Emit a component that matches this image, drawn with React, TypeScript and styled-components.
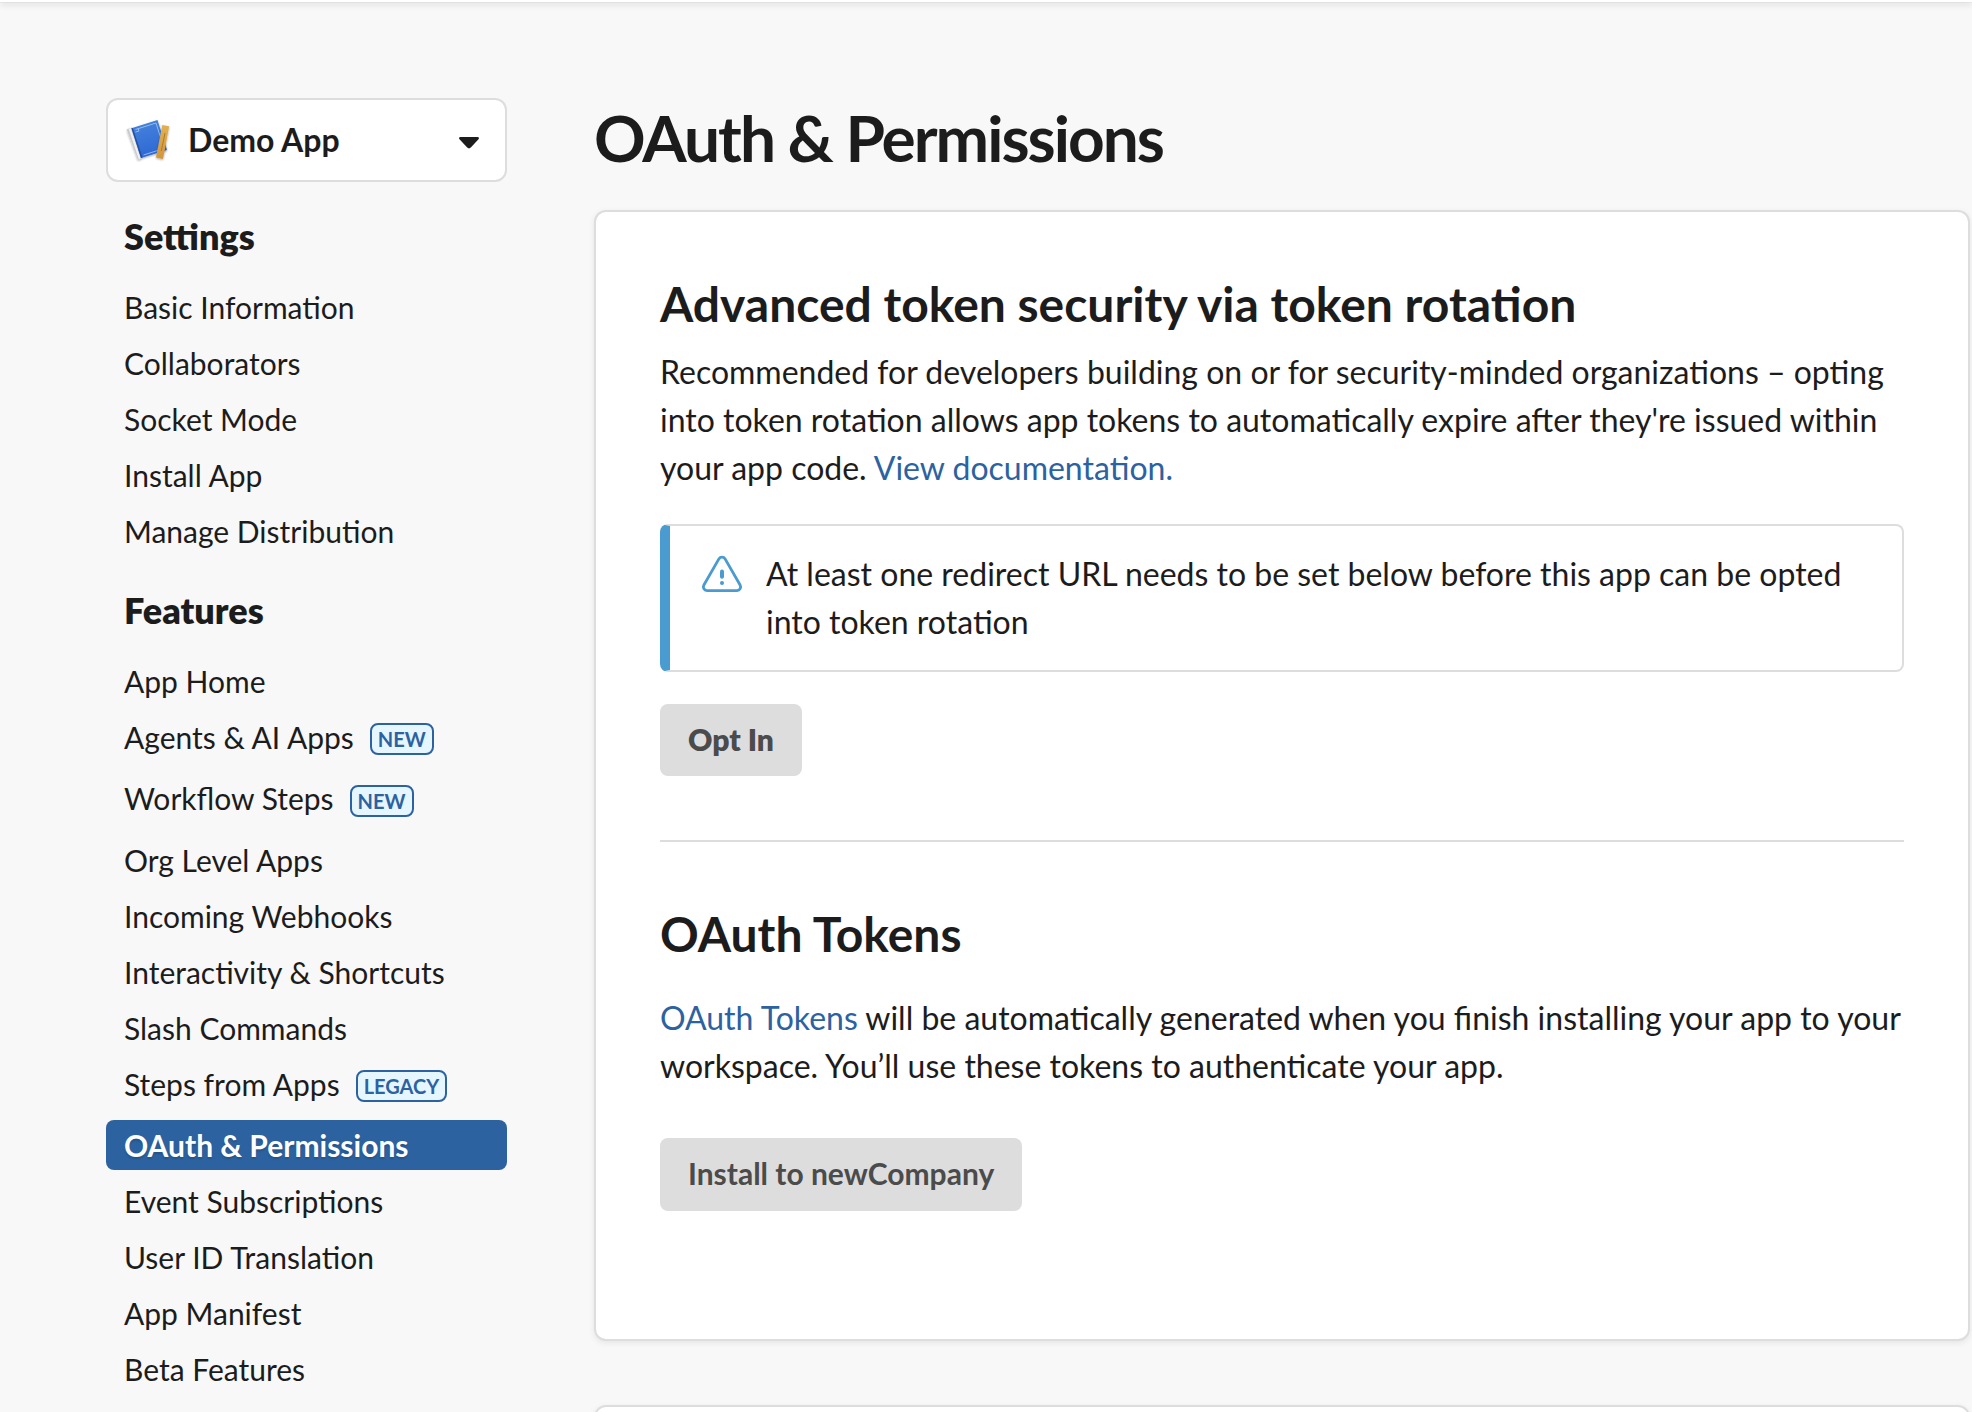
import React from "react";
import styled, { createGlobalStyle, css } from "styled-components";

const Global = createGlobalStyle`
  * { box-sizing: border-box; }
  html, body { margin: 0; padding: 0; background: #f8f8f8; }
  body {
    font-family: Lato, "Noto Sans", sans-serif;
    color: #1d1c1d;
    overflow: hidden;
    -webkit-font-smoothing: antialiased;
  }
`;

const Page = styled.div`
  height: 1412px;
  overflow: hidden;
  background: #f8f8f8;
`;

const TopBar = styled.header`
  height: 2px;
  background: #fff;
  box-shadow: 0 1px 0 rgba(0, 0, 0, 0.04), 0 2px 6px rgba(0, 0, 0, 0.22);
`;

const Layout = styled.div`
  display: flex;
  align-items: flex-start;
  gap: 87px;
  padding: 96px 2px 0 106px;
`;

const Sidebar = styled.nav`
  flex: none;
  width: 401px;
`;

const AppSelect = styled.button`
  display: flex;
  align-items: center;
  width: 100%;
  height: 84px;
  margin: 0 0 6.3px;
  padding: 0 25px 0 18px;
  border: 2px solid #dddddd;
  border-radius: 12px;
  background: #fff;
  color: inherit;
  font: 700 32px/48px Lato, "Noto Sans", sans-serif;
  text-align: left;
`;

const AppName = styled.span`
  flex: 1;
  margin-left: 14px;
`;

const GroupTitle = styled.h3`
  margin: 0;
  padding: 26px 18px 23px;
  font-size: 36px;
  line-height: 45px;
  font-weight: 800;
`;

const NavList = styled.ul`
  list-style: none;
  margin: 0;
  padding: 0;
`;

const NavItem = styled.li<{ $active?: boolean; $tagged?: boolean }>`
  display: flex;
  align-items: flex-start;
  height: ${(p) => (p.$tagged ? "55.18px" : "50px")};
  margin-bottom: 6px;
  padding: 0 18px;
  font-size: 30px;
  line-height: 50px;
  white-space: nowrap;
  ${(p) =>
    p.$active &&
    css`
      border-radius: 8px;
      background: #2c629f;
      color: #fff;
      font-weight: 700;
      text-shadow: 0 2px 2px rgba(0, 0, 0, 0.15);
    `}
`;

const Tag = styled.span`
  height: 32px;
  margin: 11.15px 0 0 16px;
  padding: 0 6px;
  border: 2px solid #2c629f;
  border-radius: 8px;
  background: #e6f6ff;
  color: #2c629f;
  font-size: 20px;
  line-height: 29px;
  font-weight: 700;
`;

const Main = styled.main`
  flex: 1;
  min-width: 0;
`;

const PageTitle = styled.h1`
  margin: 0;
  height: 112px;
  font-size: 64px;
  line-height: 80px;
  font-weight: 700;
  letter-spacing: -2px;
  white-space: nowrap;
`;

const Card = styled.section`
  height: 1131px;
  margin-bottom: 64px;
  padding: 64px;
  border: 2px solid #dddddd;
  border-radius: 12px;
  background: #fff;
  box-shadow: 0 2px 6px rgba(0, 0, 0, 0.08);
`;

const SectionTitle = styled.h2`
  margin: 0;
  font-size: 48px;
  line-height: 55px;
  font-weight: 700;
`;

const Text = styled.p<{ $gap: number }>`
  margin: ${(p) => p.$gap}px 0 0;
  font-size: 32px;
  line-height: 48px;
  white-space: nowrap;
`;

const Link = styled.a`
  color: #2c629f;
  text-decoration: none;
`;

const Alert = styled.div`
  display: flex;
  align-items: flex-start;
  height: 148px;
  margin: 32px 0;
  padding: 24px 24px 24px 30px;
  border: 2px solid #dddddd;
  border-left: 10px solid #4a9bd0;
  border-radius: 8px;
  font-size: 32px;
  line-height: 48px;
  white-space: nowrap;

  svg {
    flex: none;
    margin: 4px 22px 0 0;
  }
`;

const Button = styled.button<{ $weight: number; $height: number; $gap?: number }>`
  display: flex;
  align-items: flex-start;
  height: ${(p) => p.$height}px;
  margin: ${(p) => p.$gap ?? 0}px 0 0;
  padding: 0 28px;
  border: 0;
  border-radius: 8px;
  background: #dddddd;
  color: #4b4b4b;
  font: ${(p) => p.$weight} 30px/70px Lato, "Noto Sans", sans-serif;
`;

const Divider = styled.hr`
  height: 2px;
  margin: 64px 0;
  border: 0;
  background: #dddddd;
`;

const Caret = styled.svg`
  flex: none;
  margin-top: 6px;
`;

const BlueprintIcon = () => (
  <svg width="48" height="48" viewBox="0 0 48 48">
    <defs>
      <linearGradient id="sheet" x1="0" y1="0" x2="0.2" y2="1">
        <stop offset="0" stopColor="#4685dc" />
        <stop offset="1" stopColor="#2f68d4" />
      </linearGradient>
      <linearGradient id="ruler" x1="0" y1="0" x2="0" y2="1">
        <stop offset="0" stopColor="#e0b252" />
        <stop offset="1" stopColor="#d2963c" />
      </linearGradient>
      <filter id="soft" x="-20%" y="-20%" width="140%" height="140%">
        <feDropShadow dx="0" dy="1" stdDeviation="0.8" floodOpacity="0.35" />
      </filter>
    </defs>
    <g filter="url(#soft)">
      <path d="M0.8 13.2L6 11.5L16 42L12 44Z" fill="#c9c9c9" />
      <path d="M2.6 12.8L4.6 12.1L14.6 42.4L12.8 43.3Z" fill="#f1f1f1" />
      <path d="M5.5 12.3L31.5 4L41 34L15 42Z" fill="url(#sheet)" />
      <path d="M5.5 12.3L15 42L16.5 41.5L6.8 11.9Z" fill="#234f9f" />
    </g>
    <path d="M9.5 13.5L30 7L38 32.5L17.5 39M9.5 16L13 15L12.2 12.8" fill="none" stroke="#a9c9f5" strokeWidth="0.8" />
    <g filter="url(#soft)">
      <path d="M36.3 9L43.2 10.3L37 43L30 41.5Z" fill="url(#ruler)" />
      <path d="M39 17L35.3 35" stroke="#a8742a" strokeWidth="0.9" />
    </g>
  </svg>
);

const CaretIcon = () => (
  <Caret width="22" height="14" viewBox="0 0 22 14">
    <path
      d="M2.4 1H19.6C20.9 1 21.4 2.3 20.5 3.2L12.8 11.6C11.8 12.7 10.2 12.7 9.2 11.6L1.5 3.2C0.6 2.3 1.1 1 2.4 1Z"
      fill="#1d1c1d"
    />
  </Caret>
);

const WarningIcon = () => (
  <svg width="44" height="40" viewBox="0 0 44 40" fill="none" stroke="#4a9bd0">
    <path
      d="M18.9 4.9C20.4 2.5 23.6 2.5 25.1 4.9L40.1 31C41.5 33.4 40 36.6 37 36.6H7C4 36.6 2.5 33.4 3.9 31Z"
      strokeWidth="2.8"
      strokeLinejoin="round"
    />
    <path d="M22 17.4V22.8" strokeWidth="4" strokeLinecap="round" />
    <circle cx="22" cy="29" r="2" fill="#4a9bd0" stroke="none" />
  </svg>
);

type Entry = { label: string; tag?: string; active?: boolean };

const groups: { title: string; items: Entry[] }[] = [
  {
    title: "Settings",
    items: [
      { label: "Basic Information" },
      { label: "Collaborators" },
      { label: "Socket Mode" },
      { label: "Install App" },
      { label: "Manage Distribution" },
    ],
  },
  {
    title: "Features",
    items: [
      { label: "App Home" },
      { label: "Agents & AI Apps", tag: "NEW" },
      { label: "Workflow Steps", tag: "NEW" },
      { label: "Org Level Apps" },
      { label: "Incoming Webhooks" },
      { label: "Interactivity & Shortcuts" },
      { label: "Slash Commands" },
      { label: "Steps from Apps", tag: "LEGACY" },
      { label: "OAuth & Permissions", active: true },
      { label: "Event Subscriptions" },
      { label: "User ID Translation" },
      { label: "App Manifest" },
      { label: "Beta Features" },
    ],
  },
];

export default function App() {
  return (
    <Page>
      <Global />
      <TopBar />
      <Layout>
        <Sidebar>
          <AppSelect>
            <BlueprintIcon />
            <AppName>Demo App</AppName>
            <CaretIcon />
          </AppSelect>
          {groups.map((group) => (
            <div key={group.title}>
              <GroupTitle>{group.title}</GroupTitle>
              <NavList>
                {group.items.map((item) => (
                  <NavItem key={item.label} $active={item.active} $tagged={!!item.tag}>
                    {item.label}
                    {item.tag && <Tag>{item.tag}</Tag>}
                  </NavItem>
                ))}
              </NavList>
            </div>
          ))}
        </Sidebar>
        <Main>
          <PageTitle>OAuth &amp; Permissions</PageTitle>
          <Card>
            <SectionTitle>Advanced token security via token rotation</SectionTitle>
            <Text $gap={17}>
              Recommended for developers building on or for security-minded organizations – opting
              <br />
              into token rotation allows app tokens to automatically expire after they're issued within
              <br />
              your app code. <Link>View documentation.</Link>
            </Text>
            <Alert>
              <WarningIcon />
              <span>
                At least one redirect URL needs to be set below before this app can be opted
                <br />
                into token rotation
              </span>
            </Alert>
            <Button $weight={800} $height={72}>Opt In</Button>
            <Divider />
            <SectionTitle>OAuth Tokens</SectionTitle>
            <Text $gap={33}>
              <Link>OAuth Tokens</Link> will be automatically generated when you finish installing your app to your
              <br />
              workspace. You’ll use these tokens to authenticate your app.
            </Text>
            <Button $weight={700} $height={73} $gap={48}>Install to newCompany</Button>
          </Card>
          <Card />
        </Main>
      </Layout>
    </Page>
  );
}
